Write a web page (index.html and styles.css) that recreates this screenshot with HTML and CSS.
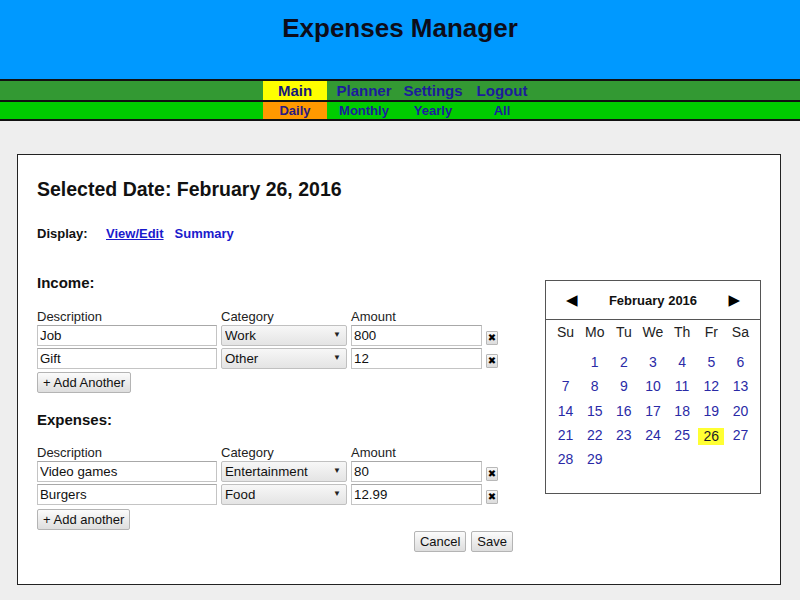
FILE: index.html
```html
<!DOCTYPE html>
<html lang="en">
<head>
<meta charset="utf-8">
<title>Expenses Manager</title>
<link rel="stylesheet" href="styles.css">
</head>
<body>
<header class="top">
  <h1 class="brand">Expenses Manager</h1>
</header>
<nav class="nav nav-main">
  <div class="nav-items">
    <a class="nav-item active" href="#">Main</a>
    <a class="nav-item" href="#">Planner</a>
    <a class="nav-item" href="#">Settings</a>
    <a class="nav-item" href="#">Logout</a>
  </div>
</nav>
<nav class="nav nav-sub">
  <div class="nav-items">
    <a class="nav-item active" href="#">Daily</a>
    <a class="nav-item" href="#">Monthly</a>
    <a class="nav-item" href="#">Yearly</a>
    <a class="nav-item" href="#">All</a>
  </div>
</nav>
<main class="page">
  <section class="panel">
    <h2 class="date-title">Selected Date: February 26, 2016</h2>
    <div class="display">
      <span class="display-label">Display:</span>
      <a class="display-link current" href="#">View/Edit</a>
      <a class="display-link" href="#">Summary</a>
    </div>
    <div class="content">
      <form class="entries">
        <h3 class="section-title">Income:</h3>
        <div class="grid labels">
          <span>Description</span><span>Category</span><span>Amount</span><span></span>
        </div>
        <div class="grid row">
          <input class="field" type="text" value="Job">
          <span class="select"><select><option>Work</option></select></span>
          <input class="field" type="text" value="800">
          <button class="remove" type="button">✖</button>
        </div>
        <div class="grid row">
          <input class="field" type="text" value="Gift">
          <span class="select"><select><option>Other</option></select></span>
          <input class="field" type="text" value="12">
          <button class="remove" type="button">✖</button>
        </div>
        <button class="btn add" type="button">+ Add Another</button>

        <h3 class="section-title expenses">Expenses:</h3>
        <div class="grid labels">
          <span>Description</span><span>Category</span><span>Amount</span><span></span>
        </div>
        <div class="grid row">
          <input class="field" type="text" value="Video games">
          <span class="select"><select><option>Entertainment</option></select></span>
          <input class="field" type="text" value="80">
          <button class="remove" type="button">✖</button>
        </div>
        <div class="grid row">
          <input class="field" type="text" value="Burgers">
          <span class="select"><select><option>Food</option></select></span>
          <input class="field" type="text" value="12.99">
          <button class="remove" type="button">✖</button>
        </div>
        <button class="btn add add-expense" type="button">+ Add another</button>
        <div class="actions">
          <button class="btn" type="button">Cancel</button>
          <button class="btn" type="button">Save</button>
        </div>
      </form>

      <aside class="calendar">
        <div class="cal-head">
          <span class="cal-arrow">◀</span>
          <span class="cal-month">February 2016</span>
          <span class="cal-arrow">▶</span>
        </div>
        <div class="cal-body">
          <div class="cal-names">
            <span>Su</span><span>Mo</span><span>Tu</span><span>We</span><span>Th</span><span>Fr</span><span>Sa</span>
          </div>
          <div class="cal-days">
            <span></span><span>1</span><span>2</span><span>3</span><span>4</span><span>5</span><span>6</span>
            <span>7</span><span>8</span><span>9</span><span>10</span><span>11</span><span>12</span><span>13</span>
            <span>14</span><span>15</span><span>16</span><span>17</span><span>18</span><span>19</span><span>20</span>
            <span>21</span><span>22</span><span>23</span><span>24</span><span>25</span><span><b class="today">26</b></span><span>27</span>
            <span>28</span><span>29</span>
          </div>
        </div>
      </aside>
    </div>
  </section>
</main>
</body>
</html>
```

FILE: styles.css
```css
* { box-sizing: border-box; }

html, body {
  margin: 0;
  padding: 0;
  background: #eeeeee;
  font-family: "Liberation Sans", Arial, sans-serif;
  color: #111;
}

.top {
  background: #0099ff;
  height: 79px;
  padding-top: 13px;
}

.brand {
  margin: 0;
  text-align: center;
  font-size: 26px;
  line-height: 30px;
  font-weight: bold;
  color: #0d0d1a;
}

.nav {
  border-top: 2px solid #111;
}

.nav-main {
  background: #339933;
  height: 21px;
}

.nav-sub {
  background: #00cc00;
  height: 21px;
  border-bottom: 2px solid #111;
}

.nav-items {
  display: flex;
  justify-content: center;
  gap: 5px;
  padding-right: 3px;
}

.nav-item {
  width: 64px;
  text-align: center;
  font-weight: bold;
  text-decoration: none;
  color: #1c1c9c;
}

.nav-main .nav-item {
  font-size: 15px;
  line-height: 19px;
}

.nav-sub .nav-item {
  font-size: 13px;
  line-height: 17px;
}

.nav-main .nav-item.active { background: #ffff00; color: #18187a; }
.nav-sub .nav-item.active { background: #ff9900; color: #2a1a80; }

.page {
  padding: 33px 19px 15px 17px;
}

.panel {
  background: #fff;
  border: 1px solid #222;
  padding: 22px 19px 32px 19px;
}

.date-title {
  margin: 0;
  font-size: 19.5px;
  line-height: 24px;
  font-weight: bold;
  color: #111;
}

.display {
  margin-top: 25px;
  font-size: 13px;
  line-height: 16px;
  font-weight: bold;
  display: flex;
}

.display-label { width: 69px; }

.display-link {
  color: #1a1acc;
  text-decoration: none;
  margin-right: 11px;
}

.display-link.current { text-decoration: underline; }

.content {
  display: flex;
  margin-top: 32px;
}

.entries {
  width: 476px;
  margin: 0;
}

.section-title {
  margin: 0 0 18px;
  font-size: 15px;
  line-height: 18px;
  font-weight: bold;
  color: #111;
}

.section-title.expenses {
  margin-top: 18px;
  margin-bottom: 17px;
}

.grid {
  display: grid;
  grid-template-columns: 180px 126px 131px 12px;
  column-gap: 4px;
  align-items: center;
}

.labels {
  font-size: 13px;
  line-height: 14px;
  height: 14px;
  margin-bottom: 1px;
  color: #222;
}

.row {
  height: 21px;
  margin-bottom: 2px;
}

.field {
  height: 21px;
  width: 100%;
  border: 1px solid #c4c4c4;
  border-top-color: #a8a8a8;
  padding: 0 2px;
  font: 13.3px "Liberation Sans", Arial, sans-serif;
  color: #111;
  background: #fff;
  margin: 0;
  outline: none;
}

.select {
  position: relative;
  display: block;
  height: 21px;
}

.select select {
  -webkit-appearance: none;
  appearance: none;
  width: 100%;
  height: 21px;
  margin: 0;
  border: 1px solid #c0c0c0;
  border-radius: 2px;
  background: linear-gradient(#f7f7f7, #e4e4e4);
  padding: 0 16px 0 3px;
  font: 13.3px "Liberation Sans", Arial, sans-serif;
  color: #111;
}

.select::after {
  content: "▼";
  position: absolute;
  right: 6px;
  top: 6px;
  font-size: 8px;
  line-height: 8px;
  color: #222;
  pointer-events: none;
}

.remove {
  width: 12px;
  height: 14px;
  padding: 0;
  margin: 4px 0 0;
  border: 1px solid #b8b8b8;
  border-radius: 1px;
  background: linear-gradient(#f8f8f8, #dcdcdc);
  font: bold 10px "DejaVu Sans", sans-serif;
  line-height: 12px;
  color: #000;
  text-align: center;
}

.btn {
  height: 21px;
  padding: 0 5px;
  border: 1px solid #b4b4b4;
  border-radius: 2px;
  background: linear-gradient(#fbfbfb, #dedede);
  font: 13px "Liberation Sans", Arial, sans-serif;
  color: #111;
  margin: 0;
}

.add {
  display: block;
  margin-top: 3px;
}

.add.add-expense { margin-top: 4px; }

.actions {
  display: flex;
  justify-content: flex-end;
  gap: 5px;
  margin-top: 1px;
}

.calendar {
  width: 216px;
  margin-left: 32px;
  margin-top: 6px;
  align-self: flex-start;
  border: 1px solid #555;
}

.cal-head {
  height: 39px;
  border-bottom: 1px solid #555;
  display: flex;
  align-items: center;
  justify-content: space-between;
  padding: 0 20px;
}

.cal-arrow {
  font: 15px "DejaVu Sans", sans-serif;
  color: #000;
  line-height: 16px;
}

.cal-month {
  font-size: 13px;
  font-weight: bold;
  color: #111;
}

.cal-body {
  padding: 0 5px 22px;
}

.cal-names,
.cal-days {
  display: grid;
  grid-template-columns: repeat(7, 1fr);
  text-align: center;
  font-size: 14px;
}

.cal-names {
  height: 24px;
  line-height: 24px;
  color: #222;
  margin-bottom: 6px;
}

.cal-days {
  grid-auto-rows: 24.3px;
  line-height: 24px;
  color: #2a2aa6;
}

.today {
  display: inline-block;
  width: 26px;
  height: 17px;
  line-height: 17px;
  font-weight: normal;
  background: #ffff33;
  color: #1a1a2a;
  vertical-align: middle;
}
```
